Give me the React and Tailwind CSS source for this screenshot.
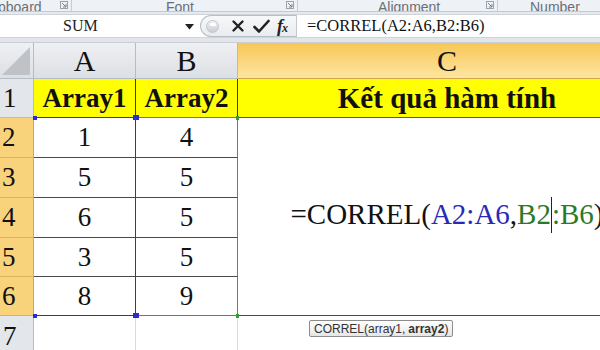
import React from "react";

const serif = { fontFamily: '"Liberation Serif", "Times New Roman", serif' };

function Launcher() {
  return (
    <svg width="8" height="8" viewBox="0 0 8 8" className="block">
      <rect x="0.5" y="0.5" width="7" height="7" fill="none" stroke="#9aa3ad" strokeWidth="1" />
      <path d="M2 2 L6 6 M6 3 L6 6 L3 6" stroke="#7a838d" strokeWidth="1" fill="none" />
    </svg>
  );
}

export default function App() {
  const dataRows = [
    { n: 2, a: 1, b: 4 },
    { n: 3, a: 5, b: 5 },
    { n: 4, a: 6, b: 5 },
    { n: 5, a: 3, b: 5 },
    { n: 6, a: 8, b: 9 },
  ];
  const grayHead = "bg-gradient-to-b from-[#eef0f3] to-[#dcdfe4]";
  return (
    <div className="w-[600px] h-[350px] overflow-hidden bg-white flex flex-col" style={serif}>
      {/* Ribbon group labels (cut off) */}
      <div className="h-[12px] shrink-0 bg-[#eef1f5] flex items-end overflow-hidden text-[14px] text-[#6a6f76] border-b border-[#c3c9d1]" style={{ fontFamily: '"Liberation Sans", Arial, sans-serif' }}>
        <div className="w-[72px] flex items-end justify-between pr-[3px] border-r border-[#c7ccd3] h-full">
          <span className="leading-none -mb-[3px] -ml-[2px]">pboard</span>
          <div className="mb-[2px]"><Launcher /></div>
        </div>
        <div className="w-[226px] flex items-end justify-between pr-[3px] border-r border-[#c7ccd3] h-full">
          <span className="leading-none -mb-[3px] ml-[94px]">Font</span>
          <div className="mb-[2px]"><Launcher /></div>
        </div>
        <div className="w-[200px] flex items-end justify-between pr-[3px] border-r border-[#c7ccd3] h-full">
          <span className="leading-none -mb-[3px] ml-[80px]">Alignment</span>
          <div className="mb-[2px]"><Launcher /></div>
        </div>
        <div className="flex-1 flex items-end h-full">
          <span className="leading-none -mb-[3px] ml-[32px]">Number</span>
        </div>
      </div>

      {/* Formula bar */}
      <div className="h-[31px] shrink-0 bg-[#e2e5ea] border-b border-[#c9ced5] flex flex-col">
        <div className="h-[2px] bg-[#e6e9ee]" />
        <div className="h-[24px] bg-white flex items-stretch border-y border-[#cfd4da]">
          <div className="w-[200px] flex items-center relative">
            <span className="absolute left-[63px] text-[16px] leading-none text-[#222]">SUM</span>
            <svg width="9" height="6" viewBox="0 0 9 6" className="absolute left-[185px] top-[9px]">
              <path d="M0 0 L9 0 L4.5 5.5 Z" fill="#222" />
            </svg>
          </div>
          <div className="w-[96px] flex items-center bg-gradient-to-b from-[#f7f8fa] to-[#e9ecf0] rounded-l-full border-l border-y border-[#b7bec7] relative">
            <div className="ml-[5px] w-[13px] h-[13px] rounded-full bg-gradient-to-b from-[#f2f3f5] to-[#c9cdd3] border border-[#c0c5cc] flex items-start justify-center">
              <div className="mt-[2px] w-[6px] h-[3px] rounded-full bg-white" />
            </div>
            <svg width="14" height="14" viewBox="0 0 14 14" className="ml-[12px]">
              <path d="M2.5 2.5 L11.5 11.5 M11.5 2.5 L2.5 11.5" stroke="#222" strokeWidth="2.4" strokeLinecap="round" />
            </svg>
            <svg width="17" height="15" viewBox="0 0 17 15" className="ml-[8px]">
              <path d="M1.5 8 L6 12.5 L15.5 2" stroke="#222" strokeWidth="2.6" fill="none" strokeLinecap="round" strokeLinejoin="round" />
            </svg>
            <span className="ml-[7px] italic font-bold text-[18px] leading-none text-[#222] tracking-[-1px]">f<span className="text-[12px]">x</span></span>
          </div>
          <div className="w-px bg-[#c3c8cf]" />
          <div className="flex-1 flex items-center pl-[10px]">
            <span className="text-[16.5px] leading-none text-[#111] whitespace-nowrap">=CORREL(A2:A6,B2:B6)</span>
          </div>
        </div>
      </div>

      {/* Sheet */}
      <div className="relative grid grid-cols-[34px_102px_102px_418px] grid-rows-[36px_39px_40px_40px_40px_39px_39px_40px] text-[#111]">
        {/* header row */}
        <div className={`${grayHead} border-r border-b border-[#b4bcc6] relative`}>
          <svg width="28" height="28" viewBox="0 0 28 28" className="absolute right-[3px] bottom-[3px]">
            <path d="M28 0 L28 28 L0 28 Z" fill="#bfc3c8" />
          </svg>
        </div>
        <div className={`${grayHead} border-r border-b border-[#b4bcc6] flex items-center justify-center text-[30px] leading-none`}>A</div>
        <div className={`${grayHead} border-r border-b border-[#b4bcc6] flex items-center justify-center text-[30px] leading-none`}>B</div>
        <div className="bg-gradient-to-b from-[#f8c654] to-[#fde6a0] border-b border-[#d0a449] flex items-center justify-center text-[30px] leading-none">C</div>

        {/* row 1 */}
        <div className="bg-[#e3e6ea] border-r border-b border-[#b4bcc6] flex items-center pl-[3px] text-[27px] leading-none">1</div>
        <div className="bg-[#ffff00] border-r border-b border-r-[#3a3a3a] border-b-[#2b2bd6] flex items-center justify-center font-bold text-[27px] leading-none">Array1</div>
        <div className="bg-[#ffff00] border-r border-b border-r-[#3a3a3a] border-b-[#3a9a3a] flex items-center justify-center font-bold text-[27px] leading-none">Array2</div>
        <div className="bg-[#ffff00] border-b border-[#555] flex items-center justify-center font-bold text-[29px] leading-none whitespace-nowrap">Kết quả hàm tính</div>

        {dataRows.map((r, i) => {
          const last = i === dataRows.length - 1;
          return (
            <React.Fragment key={r.n}>
              <div className="bg-[#f8d37b] border-r border-b border-r-[#d2a854] border-b-[#dcb25e] flex items-center pl-[2px] text-[27px] leading-none" style={{ gridRow: i + 3, gridColumn: 1 }}>{r.n}</div>
              <div className={`border-r border-b border-r-[#2b2bd6] ${last ? "border-b-[#2b2bd6]" : "border-b-[#4a4a4a]"} flex items-center justify-center text-[27px] leading-none`} style={{ gridRow: i + 3, gridColumn: 2 }}>{r.a}</div>
              <div className={`border-r border-b border-r-[#b24db2] ${last ? "border-b-[#3a9a3a]" : "border-b-[#4a4a4a]"} flex items-center justify-center text-[27px] leading-none`} style={{ gridRow: i + 3, gridColumn: 3 }}>{r.b}</div>
            </React.Fragment>
          );
        })}
        <div className="col-start-4 row-start-3 row-span-5 border-b border-[#4a4a4a] flex items-center justify-center">
          <span className="text-[29px] leading-none whitespace-nowrap">
            =CORREL(<span className="text-[#2a2ab8]">A2:A6</span>,<span className="text-[#2b7a2b]">B2<span className="inline-block w-px h-[36px] bg-[#222] align-middle -mt-[4px]" />:B6</span>)
          </span>
        </div>

        {/* row 7 */}
        <div className="bg-[#e3e6ea] border-r border-[#b4bcc6] flex items-center pl-[3px] text-[27px] leading-none">7</div>
        <div className="border-r border-[#dadada]" />
        <div className="border-r border-[#dadada]" />
        <div className="relative">
          <div className="absolute left-[71px] top-[4px] h-[17px] px-[4px] flex items-center rounded-[2px] border border-[#8c8c8c] bg-gradient-to-b from-white to-[#e6e6e6] text-[12px] leading-none text-[#333] whitespace-nowrap" style={{ fontFamily: '"Liberation Sans", Arial, sans-serif' }}>
            CORREL(array1, <b className="ml-[3px]">array2</b>)
          </div>
        </div>

        {/* selection handles */}
        <div className="absolute left-[33px] top-[73px] w-[4px] h-[4px] bg-[#2b2bd6]" />
        <div className="absolute left-[133px] top-[72px] w-[6px] h-[5px] bg-[#2b2bd6]" />
        <div className="absolute left-[236px] top-[73px] w-[3px] h-[4px] bg-[#3a9a3a]" />
        <div className="absolute left-[33px] top-[271px] w-[4px] h-[4px] bg-[#2b2bd6]" />
        <div className="absolute left-[133px] top-[270px] w-[6px] h-[5px] bg-[#2b2bd6]" />
        <div className="absolute left-[236px] top-[271px] w-[3px] h-[4px] bg-[#3a9a3a]" />
      </div>
    </div>
  );
}
